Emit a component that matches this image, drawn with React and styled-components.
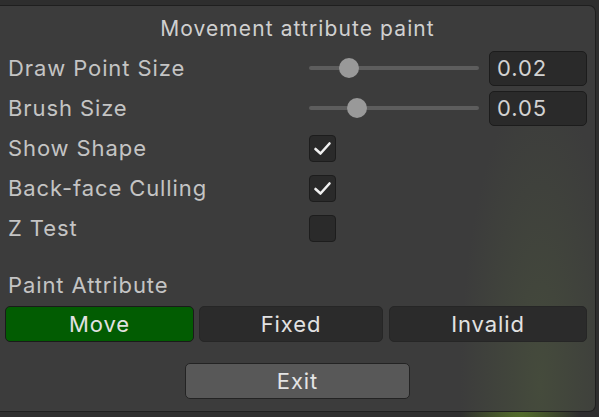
import React from 'react';
import styled, { createGlobalStyle } from 'styled-components';

const GlobalStyle = createGlobalStyle`
	html, body {
		margin: 0;
		padding: 0;
		background: #2e2e2e;
	}
	body {
		font-family: Inter, "Noto Sans", "Liberation Sans", sans-serif;
	}
`;

const Scene = styled.div`
	width: 599px;
	height: 417px;
	overflow: hidden;
	background:
		radial-gradient(ellipse 60px 200px at 520px 440px, rgba(120, 170, 40, 0.55), rgba(120, 170, 40, 0) 100%),
		#2e2e2e;
	padding-top: 5px;
	box-sizing: border-box;
`;

const Panel = styled.div`
	width: 596px;
	height: 407px;
	box-sizing: border-box;
	border: 1px solid #1f1f1f;
	border-left: none;
	border-radius: 0 7px 7px 0;
	background:
		radial-gradient(ellipse 80px 300px at 540px 380px, rgba(90, 110, 60, 0.3), rgba(90, 110, 60, 0) 100%),
		#3c3c3c;
	color: #c4c4c4;
	font-size: 22px;
	font-weight: 400;
	letter-spacing: 0.9px;
	display: flex;
	flex-direction: column;
	padding: 9px 8px 0 0;
`;

const Title = styled.div`
	height: 28px;
	line-height: 28px;
	text-align: center;
	font-size: 21px;
	letter-spacing: 1.1px;
	color: #d0d0d0;
	padding-left: 8px;
	margin-bottom: 5px;
`;

const Row = styled.div`
	height: 40px;
	display: grid;
	grid-template-columns: 301px 170px 1fr;
	align-items: center;
	padding-left: 8px;
`;

const Label = styled.div`
	line-height: 26px;
	white-space: nowrap;
`;

const Track = styled.div`
	position: relative;
	height: 4px;
	background: #5d5d5d;
	border-radius: 2px;
`;

const Knob = styled.div`
	position: absolute;
	top: -8px;
	width: 20px;
	height: 20px;
	border-radius: 50%;
	background: #999999;
`;

const NumberField = styled.div`
	margin-left: 10px;
	height: 35px;
	box-sizing: border-box;
	background: #2a2a2a;
	border: 1px solid #1c1c1c;
	border-radius: 5px;
	padding-left: 7px;
	line-height: 33px;
	color: #d2d2d2;
`;

const CheckBox = styled.div`
	width: 27px;
	height: 27px;
	box-sizing: border-box;
	background: #2a2a2a;
	border: 1px solid #1d1d1d;
	border-radius: 4px;
	display: flex;
	align-items: center;
	justify-content: center;
`;

const Section = styled.div`
	margin-top: 23px;
	padding-left: 8px;
	height: 28px;
	line-height: 28px;
`;

const Toolbar = styled.div`
	margin-top: 7px;
	padding-left: 5px;
	display: grid;
	grid-template-columns: 189px 184px 199px;
	column-gap: 5px;
`;

const ToolButton = styled.div`
	height: 36px;
	box-sizing: border-box;
	border: 1px solid ${props => props.active ? '#1a1a1a' : '#262626'};
	border-radius: 5px;
	background: ${props => props.active ? '#025c02' : '#2b2b2b'};
	color: #e2e2e2;
	text-align: center;
	line-height: 34px;
	&:nth-child(3) {
		margin-left: 1px;
	}
`;

const Footer = styled.div`
	margin-top: 21px;
	display: flex;
	justify-content: center;
	padding-left: 8px;
`;

const ExitButton = styled.div`
	width: 225px;
	height: 36px;
	box-sizing: border-box;
	background: #585858;
	border: 1px solid #232323;
	border-radius: 5px;
	color: #e4e4e4;
	text-align: center;
	line-height: 34px;
`;

const Check = () => (
	<svg width="19" height="15" viewBox="0 0 19 15">
		<path d="M2.5 8 L7.5 12.5 L16.5 2.5" fill="none" stroke="#f0f0f0" strokeWidth="2.6" strokeLinecap="round" strokeLinejoin="round" />
	</svg>
);

const Slider = ({ value, max }) => (
	<Track>
		<Knob style={{ left: `${(value / max) * 150}px` }} />
	</Track>
);

const sliders = [
	{ label: 'Draw Point Size', value: 0.02, max: 0.1 },
	{ label: 'Brush Size', value: 0.05, max: 0.2 },
];

const toggles = [
	{ label: 'Show Shape', checked: true },
	{ label: 'Back-face Culling', checked: true },
	{ label: 'Z Test', checked: false },
];

const modes = ['Move', 'Fixed', 'Invalid'];

export default function App() {
	return (
		<Scene>
			<GlobalStyle />
			<Panel>
				<Title>Movement attribute paint</Title>
				{sliders.map(s => (
					<Row key={s.label}>
						<Label>{s.label}</Label>
						<Slider value={s.value} max={s.max} />
						<NumberField>{s.value.toFixed(2)}</NumberField>
					</Row>
				))}
				{toggles.map(t => (
					<Row key={t.label}>
						<Label>{t.label}</Label>
						<CheckBox>{t.checked && <Check />}</CheckBox>
					</Row>
				))}
				<Section>Paint Attribute</Section>
				<Toolbar>
					{modes.map((m, i) => <ToolButton key={m} active={i === 0}>{m}</ToolButton>)}
				</Toolbar>
				<Footer>
					<ExitButton>Exit</ExitButton>
				</Footer>
			</Panel>
		</Scene>
	);
}
